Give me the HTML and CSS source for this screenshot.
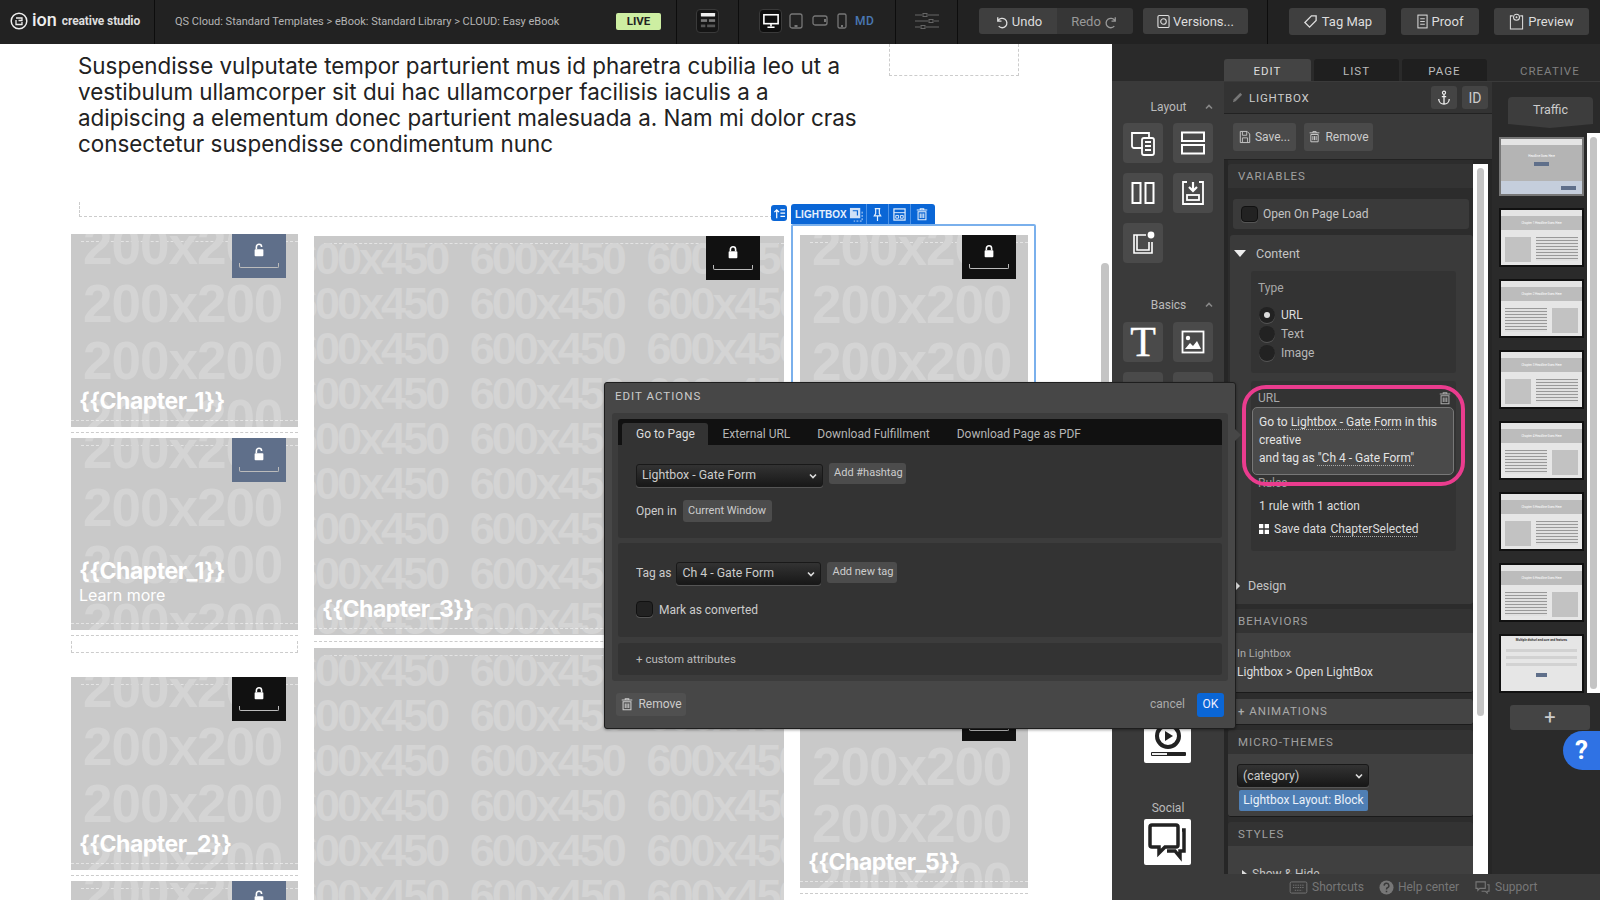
FILE: index.html
```html
<!DOCTYPE html>
<html lang="en">
<head>
  <meta charset="UTF-8">
  <title>ion creative studio</title>
  <link rel="stylesheet" href="styles.css">
</head>
<body>
<svg class="sprites" width="0" height="0">
  <symbol id="i-trash" viewBox="0 0 16 16"><path d="M2 3.5h12M6 3.5V2h4v1.5M3.5 5.5h9v9h-9zM6 7.5v5M8 7.5v5M10 7.5v5" fill="none" stroke="currentColor" stroke-width="1.2"/></symbol>
  <symbol id="i-lock" viewBox="0 0 16 16"><path d="M5 7V5a3 3 0 0 1 6 0v2" fill="none" stroke="#fff" stroke-width="1.8"/><rect x="3" y="7" width="10" height="8" rx="1" fill="#fff"/></symbol>
  <symbol id="i-unlock" viewBox="0 0 16 16"><path d="M5 7V4.5a3 3 0 0 1 6 0" fill="none" stroke="#fff" stroke-width="1.8"/><rect x="3" y="7" width="10" height="8" rx="1" fill="#fff"/></symbol>
  <symbol id="i-chev" viewBox="0 0 8 6"><path d="M1 1.5l3 3 3-3" fill="none" stroke="currentColor" stroke-width="1.6"/></symbol>
</svg>

<header class="topbar">
  <div class="tb-brand">
    <svg class="logo" viewBox="0 0 18 18" width="18" height="18"><circle cx="9" cy="9" r="7.8" fill="none" stroke="#eee" stroke-width="1.5"/><path d="M6 6h6v2.5H8.500M6 8v4.500h6V10" fill="none" stroke="#eee" stroke-width="1.3"/></svg>
    <span class="ion">ion</span>
    <span class="studio">creative studio</span>
  </div>
  <div class="tb-crumbs">QS Cloud: Standard Templates &gt; eBook: Standard Library &gt; CLOUD: Easy eBook</div>
  <div class="tb-live"><span class="live">LIVE</span></div>
  <div class="tb-layout">
    <span class="layout-btn"><svg viewBox="0 0 18 22" width="16" height="20"><rect x="1" y="2" width="16" height="4" rx=".5" fill="#eee"/><rect x="1" y="9" width="7" height="3" fill="#777"/><rect x="10" y="9" width="7" height="3" fill="#777"/><rect x="1" y="15" width="5" height="3" fill="#555"/><rect x="8" y="15" width="9" height="3" fill="#555"/></svg></span>
  </div>
  <div class="tb-devices">
    <span class="device on"><svg viewBox="0 0 20 18" width="18" height="16"><rect x="2" y="2" width="16" height="10" fill="none" stroke="#fff" stroke-width="1.8"/><path d="M10 12v3M6 16h8" stroke="#fff" stroke-width="1.8"/></svg></span>
    <svg class="dev" viewBox="0 0 14 16" width="14" height="16"><rect x="1" y="1" width="12" height="14" rx="2" fill="none" stroke="#777" stroke-width="1.3"/><rect x="5.5" y="12" width="3" height="2" fill="#777"/></svg>
    <svg class="dev" viewBox="0 0 16 12" width="16" height="12"><rect x="1" y="1" width="14" height="9" rx="2" fill="none" stroke="#777" stroke-width="1.3"/><rect x="12" y="4" width="2" height="3" fill="#777"/></svg>
    <svg class="dev" viewBox="0 0 10 16" width="10" height="16"><rect x="1" y="1" width="8" height="14" rx="1.5" fill="none" stroke="#777" stroke-width="1.3"/><rect x="4" y="12" width="2" height="2" fill="#777"/></svg>
    <span class="md">MD</span>
  </div>
  <div class="tb-sliders">
    <svg viewBox="0 0 26 18" width="26" height="18"><path d="M1 3h7M14 3h11M1 9h13M20 9h5M1 15h5M12 15h13" stroke="#666" stroke-width="1.2"/><rect x="9" y="1.5" width="4" height="3" fill="none" stroke="#666"/><rect x="15" y="7.5" width="4" height="3" fill="none" stroke="#666"/><rect x="7" y="13.5" width="4" height="3" fill="none" stroke="#666"/></svg>
  </div>
  <div class="tb-history">
    <div class="btn-group">
      <span class="tb-btn"><svg viewBox="0 0 16 16" width="15" height="15"><path d="M4 3.5v4h4M4.5 7a5 5 0 1 1 .5 6" fill="none" stroke="#ddd" stroke-width="1.4"/></svg>Undo</span>
      <span class="tb-btn off">Redo<svg viewBox="0 0 16 16" width="15" height="15"><path d="M12 3.5v4H8M11.500 7a5 5 0 1 0-.5 6" fill="none" stroke="#999" stroke-width="1.4"/></svg></span>
    </div>
    <span class="tb-btn solo"><svg viewBox="0 0 14 16" width="13" height="15"><rect x="1" y="1.5" width="12" height="13" rx="1.5" fill="none" stroke="#ddd" stroke-width="1.2"/><circle cx="7" cy="8" r="3" fill="none" stroke="#ddd" stroke-width="1.2"/></svg>Versions...</span>
  </div>
  <div class="tb-actions">
    <span class="tb-btn solo"><svg viewBox="0 0 16 16" width="15" height="15"><path d="M9 2h5v5l-7 7-5-5z" fill="none" stroke="#ddd" stroke-width="1.4"/></svg>Tag Map</span>
    <span class="tb-btn solo"><svg viewBox="0 0 12 16" width="11" height="15"><rect x="1" y="1" width="10" height="14" fill="none" stroke="#ddd" stroke-width="1.1"/><path d="M3.500 5h5M3.500 8h5M3.500 11h5" stroke="#ddd"/></svg>Proof</span>
    <span class="tb-btn solo"><svg viewBox="0 0 16 18" width="15" height="17"><path d="M4 3H1.500v14h13V3H12" fill="none" stroke="#ddd" stroke-width="1.1"/><circle cx="8" cy="4.5" r="3.2" fill="none" stroke="#ddd" stroke-width="1.1"/><circle cx="8" cy="4.5" r="1" fill="#ddd"/></svg>Preview</span>
  </div>
</header>

<div class="workspace">
  <main class="canvas">
    <div class="canvas-top">
      <p class="lead">Suspendisse vulputate tempor parturient mus id pharetra cubilia leo ut a vestibulum ullamcorper sit dui hac ullamcorper facilisis iaculis a a adipiscing a elementum donec parturient malesuada a. Nam mi dolor cras consectetur suspendisse condimentum nunc</p>
      <div class="dash-top"></div>
    </div>
    <div class="dash-bar"></div>

    <div class="columns">
      <div class="col col-small">
        <div class="slot">
          <div class="card h193">
            <div class="ph">200x200 200x200 200x200 200x200</div>
            <span class="lock-tile open"><svg width="14" height="14"><use href="#i-unlock"/></svg><i></i></span>
            <div class="chapter">{{Chapter_1}}</div>
          </div>
        </div>
        <div class="slot">
          <div class="card h192 with-link">
            <div class="ph">200x200 200x200 200x200 200x200</div>
            <span class="lock-tile open"><svg width="14" height="14"><use href="#i-unlock"/></svg><i></i></span>
            <div class="chapter">{{Chapter_1}}</div>
            <div class="learn">Learn more</div>
          </div>
        </div>
        <div class="dash-box"></div>
        <div class="slot">
          <div class="card h193">
            <div class="ph">200x200 200x200 200x200 200x200</div>
            <span class="lock-tile"><svg width="14" height="14"><use href="#i-lock"/></svg><i></i></span>
            <div class="chapter">{{Chapter_2}}</div>
          </div>
        </div>
        <div class="card h193">
          <div class="ph">200x200 200x200 200x200 200x200</div>
          <span class="lock-tile open"><svg width="14" height="14"><use href="#i-unlock"/></svg><i></i></span>
        </div>
      </div>

      <div class="col col-wide">
        <div class="slot">
          <div class="card h399">
            <div class="ph ph-wide">600x450 600x450 600x450 600x450 600x450 600x450 600x450 600x450 600x450 600x450 600x450 600x450 600x450 600x450 600x450 600x450 600x450 600x450 600x450 600x450 600x450 600x450 600x450 600x450 600x450 600x450 600x450</div>
            <span class="lock-tile wide-lock"><svg width="14" height="14"><use href="#i-lock"/></svg><i></i></span>
            <div class="chapter">{{Chapter_3}}</div>
          </div>
        </div>
        <div class="card h399">
          <div class="ph ph-wide">600x450 600x450 600x450 600x450 600x450 600x450 600x450 600x450 600x450 600x450 600x450 600x450 600x450 600x450 600x450 600x450 600x450 600x450 600x450 600x450 600x450 600x450 600x450 600x450 600x450 600x450 600x450</div>
        </div>
      </div>

      <div class="col col-box">
        <div class="lightbox">
          <span class="lb-up"><svg viewBox="0 0 14 14" width="13" height="13"><path d="M4 12V3M1.5 5.5L4 3l2.5 2.5M8 3h5M8 6.5h5M8 10h5" fill="none" stroke="#fff" stroke-width="1.3"/></svg></span>
          <div class="lb-tools">
            <span class="lb-name">LIGHTBOX</span>
            <span class="lb-tool first"><svg viewBox="0 0 16 16" width="15" height="15"><rect x="1" y="1" width="11" height="11" fill="#cfe0f7"/><path d="M4 4h5v5" fill="none" stroke="#0a66d6" stroke-width="1.3"/><path d="M14 5v10H5" fill="none" stroke="#cfe0f7" stroke-dasharray="2 1.5"/></svg></span>
            <span class="lb-tool"><svg viewBox="0 0 12 16" width="11" height="15"><path d="M3 1.5h6M4 2v5L2.5 9.500h7L8 7V2M6 10v5" fill="none" stroke="#e6f0fc" stroke-width="1.3"/></svg></span>
            <span class="lb-tool"><svg viewBox="0 0 14 14" width="13" height="13"><rect x="1" y="1" width="12" height="12" fill="none" stroke="#e6f0fc" stroke-width="1.3"/><path d="M1 5h12M3 8h3v3H3zM8 8h3v3H8z" fill="none" stroke="#e6f0fc"/></svg></span>
            <span class="lb-tool"><svg class="lb-trash" width="14" height="14"><use href="#i-trash"/></svg></span>
          </div>
          <div class="card h197">
            <div class="ph">200x200 200x200 200x200 200x200</div>
            <span class="lock-tile"><svg width="14" height="14"><use href="#i-lock"/></svg><i></i></span>
          </div>
        </div>
        <div class="slot last">
          <div class="card h191">
            <div class="ph">200x200 200x200 200x200 200x200</div>
            <span class="lock-tile"><svg width="14" height="14"><use href="#i-lock"/></svg><i></i></span>
            <div class="chapter">{{Chapter_5}}</div>
          </div>
        </div>
      </div>
    </div>

    <div class="canvas-scroll"><span></span></div>
  </main>

  <aside class="dock">
    <div class="dock-tabs">
      <span class="dock-tab active">EDIT</span>
      <span class="dock-tab">LIST</span>
      <span class="dock-tab">PAGE</span>
      <span class="creative-tab">CREATIVE</span>
    </div>

    <div class="dock-body">
      <div class="tools">
        <div class="tool-head">Layout<svg width="8" height="6" class="up"><use href="#i-chev"/></svg></div>
        <div class="tool-grid">
          <span class="tile"><svg viewBox="0 0 30 30" width="30" height="30"><path d="M10 20H6a2 2 0 0 1-2-2V5h17v4M5 20h10" fill="none" stroke="#fff" stroke-width="1.8"/><rect x="14" y="10" width="12" height="17" rx="2" fill="none" stroke="#fff" stroke-width="1.8"/><path d="M17 14h6M17 18h6M17 22h6" stroke="#fff" stroke-width="1.8"/></svg></span>
          <span class="tile"><svg viewBox="0 0 26 24" width="26" height="24"><rect x="2" y="1.5" width="22" height="8.5" fill="none" stroke="#fff" stroke-width="2"/><rect x="2" y="14" width="22" height="8.5" fill="none" stroke="#fff" stroke-width="2"/></svg></span>
          <span class="tile"><svg viewBox="0 0 24 24" width="24" height="24"><rect x="1.5" y="2" width="8" height="20" fill="none" stroke="#fff" stroke-width="2"/><rect x="14.5" y="2" width="8" height="20" fill="none" stroke="#fff" stroke-width="2"/></svg></span>
          <span class="tile"><svg viewBox="0 0 24 26" width="24" height="26"><path d="M6 2H2v22h20V2h-4" fill="none" stroke="#fff" stroke-width="1.8"/><path d="M12 2v8M8 7l4 4 4-4" fill="none" stroke="#fff" stroke-width="2.2"/><rect x="6" y="15" width="12" height="5" fill="none" stroke="#fff" stroke-width="1.8"/></svg></span>
          <span class="tile"><svg viewBox="0 0 24 24" width="24" height="24"><path d="M15 4H3v18h18V11M6 4v15h12V11" fill="none" stroke="#fff" stroke-width="1.6"/><circle cx="20" cy="4" r="3.4" fill="#fff"/></svg></span>
        </div>
        <div class="tool-head basics">Basics<svg width="8" height="6" class="up"><use href="#i-chev"/></svg></div>
        <div class="tool-grid">
          <span class="tile tile-t">T</span>
          <span class="tile"><svg viewBox="0 0 24 24" width="24" height="24"><rect x="1.5" y="1.5" width="21" height="21" fill="none" stroke="#fff" stroke-width="1.8"/><circle cx="7" cy="8" r="2.2" fill="#fff"/><path d="M4 19l5-6 3 3 4-5 4 8z" fill="#fff"/></svg></span>
          <span class="tile"></span>
          <span class="tile"></span>
        </div>
        <div class="white-tile video">
          <svg viewBox="0 0 46 46" width="46" height="46"><circle cx="23" cy="19" r="11" fill="none" stroke="#222" stroke-width="4"/><path d="M20 14l8 5-8 5z" fill="#222"/><rect x="6" y="35" width="35" height="4" rx="1" fill="#222"/><rect x="7" y="36" width="15" height="2" fill="#eee"/></svg>
        </div>
        <div class="tool-label">Social</div>
        <div class="white-tile social">
          <svg viewBox="0 0 46 46" width="46" height="46"><path d="M7 6h24a2 2 0 0 1 2 2v18a2 2 0 0 1-2 2H20l-6 6v-6H7a2 2 0 0 1-2-2V8a2 2 0 0 1 2-2z" fill="none" stroke="#222" stroke-width="3.5"/><path d="M37 11h2v21h-4v6l-5-6h-8" fill="none" stroke="#222" stroke-width="3.5"/></svg>
        </div>
      </div>

      <div class="dock-main">
        <div class="dock-row">
          <section class="inspector">
            <div class="insp-head">
              <svg class="pencil" viewBox="0 0 14 14" width="13" height="13"><path d="M2 12l1-3 7-7 2 2-7 7z" fill="#777"/></svg>
              <span class="insp-title">LIGHTBOX</span>
              <span class="square-btn anchor"><svg viewBox="0 0 16 18" width="14" height="16"><circle cx="8" cy="3" r="1.8" fill="none" stroke="#eee" stroke-width="1.3"/><path d="M8 5v11M2 10c0 4 3 6 6 6s6-2 6-6M5.500 7.500h5" fill="none" stroke="#eee" stroke-width="1.5"/></svg></span>
              <span class="square-btn">ID</span>
            </div>
            <div class="insp-actions">
              <span class="btn save"><svg viewBox="0 0 14 16" width="12" height="14"><path d="M1.500 1.500h8l3 3v10h-11z" fill="none" stroke="#ccc" stroke-width="1.1"/><path d="M4 2v4h5V2M4 14v-5h6v5" fill="none" stroke="#ccc"/></svg>Save...</span>
              <span class="btn remove"><svg width="13" height="13"><use href="#i-trash"/></svg>Remove</span>
            </div>
            <div class="insp-scroll">
              <div class="insp-list">
                <h3 class="sec-head first">VARIABLES</h3>
                <div class="check-row"><span class="checkbox"></span>Open On Page Load</div>

                <div class="content-block">
                  <div class="tree-row"><i class="tri-down"></i>Content</div>
                  <div class="box type-box">
                    <div class="box-label">Type</div>
                    <label class="radio-row sel"><i class="radio"></i>URL</label>
                    <label class="radio-row"><i class="radio"></i>Text</label>
                    <label class="radio-row"><i class="radio"></i>Image</label>
                  </div>
                  <div class="box url-box">
                    <div class="url-head">URL<svg width="14" height="14"><use href="#i-trash"/></svg></div>
                    <div class="url-text">Go to <u>Lightbox - Gate Form</u> in this creative<br>and tag as <u>"Ch 4 - Gate Form"</u></div>
                    <div class="rules-label">Rules</div>
                    <div class="rule-line">1 rule with 1 action</div>
                    <div class="rule-line save-data"><svg viewBox="0 0 10 10" width="10" height="10"><path d="M0 0h4.300v4.300H0zM5.700 0H10v4.300H5.700zM0 5.700h4.300V10H0zM5.700 5.700H10V10H5.700z" fill="#fff"/></svg>Save data <u>ChapterSelected</u></div>
                    <div class="ring"></div>
                  </div>
                  <div class="tree-row design"><i class="tri-right"></i>Design</div>
                </div>

                <h3 class="sec-head">BEHAVIORS</h3>
                <div class="sec-body behaviors">
                  <div class="muted">In Lightbox</div>
                  <div>Lightbox &gt; Open LightBox</div>
                </div>
                <h3 class="sec-head anim"><span class="plus">+</span> ANIMATIONS</h3>
                <h3 class="sec-head">MICRO-THEMES</h3>
                <div class="sec-body themes">
                  <div class="select theme-select">(category)<svg width="8" height="6"><use href="#i-chev"/></svg></div>
                  <div class="theme-tag">Lightbox Layout: Block</div>
                </div>
                <h3 class="sec-head">STYLES</h3>
                <div class="sec-body styles"><div class="tree-row small"><i class="tri-right sm"></i>Show &amp; Hide</div></div>
              </div>
              <div class="white-scroll"><span></span></div>
            </div>
          </section>

          <section class="pages">
            <div class="traffic">Traffic</div>
            <div class="thumb-area">
              <div class="thumb-list">
                <div class="thumb selected"><i class="th-bar"></i><div class="th-hero tall"><b>Headline Goes Here</b><i class="th-btn"></i></div><div class="th-foot"><i class="th-btn"></i></div></div>
                <div class="thumb"><i class="th-bar"></i><div class="th-hero"><b>Chapter 1 Headline Goes Here</b></div><div class="th-split"><i class="th-img"></i><i class="th-lines"></i></div></div>
                <div class="thumb"><i class="th-bar"></i><div class="th-hero"><b>Chapter 2 Headline Goes Here</b></div><div class="th-split"><i class="th-lines"></i><i class="th-img"></i></div></div>
                <div class="thumb"><i class="th-bar"></i><div class="th-hero"><b>Chapter 3 Headline Goes Here</b></div><div class="th-split"><i class="th-img"></i><i class="th-lines"></i></div></div>
                <div class="thumb"><i class="th-bar"></i><div class="th-hero"><b>Chapter 4 Headline Goes Here</b></div><div class="th-split"><i class="th-lines"></i><i class="th-img"></i></div></div>
                <div class="thumb"><i class="th-bar"></i><div class="th-hero"><b>Chapter 5 Headline Goes Here</b></div><div class="th-split"><i class="th-img"></i><i class="th-lines"></i></div></div>
                <div class="thumb"><i class="th-bar"></i><div class="th-hero"><b>Chapter 6 Headline Goes Here</b></div><div class="th-split"><i class="th-lines"></i><i class="th-img"></i></div></div>
                <div class="thumb form"><b>Multiple dtchurl and sure and features</b><i class="th-field"></i><i class="th-field"></i><i class="th-field"></i><i class="th-btn"></i></div>
              </div>
              <div class="white-scroll thumbs-scroll"><span></span></div>
            </div>
            <div class="add-page">+</div>
          </section>
        </div>

        <footer class="dock-foot">
          <span><svg viewBox="0 0 20 14" width="19" height="13"><rect x="1" y="1" width="18" height="12" rx="1.5" fill="none" stroke="#777"/><path d="M4 4.500h12M4 7h12M6 10h8" stroke="#777" stroke-dasharray="1.5 1"/></svg>Shortcuts</span>
          <span><svg viewBox="0 0 16 16" width="15" height="15"><circle cx="8" cy="8" r="7.5" fill="#777"/><path d="M5.500 6a2.500 2.500 0 1 1 3.500 2.300c-.7.3-1 .7-1 1.700M8 11.500v1.500" fill="none" stroke="#3a3a3a" stroke-width="1.6"/></svg>Help center</span>
          <span><svg viewBox="0 0 18 14" width="17" height="13"><path d="M2 1h10v7H6l-2 2V8H2zM14 4h2v7h-2v2l-2-2H8" fill="none" stroke="#777" stroke-width="1.2"/></svg>Support</span>
        </footer>
      </div>
    </div>
  </aside>

  <div class="help-bubble">?</div>

  <div class="modal">
    <div class="modal-title">EDIT ACTIONS</div>
    <div class="modal-inner">
      <div class="modal-tabs">
        <span class="modal-tab active">Go to Page</span>
        <span class="modal-tab">External URL</span>
        <span class="modal-tab">Download Fulfillment</span>
        <span class="modal-tab">Download Page as PDF</span>
      </div>
      <div class="modal-sec goto">
        <div class="m-row">
          <div class="select page-select">Lightbox - Gate Form<svg width="8" height="6"><use href="#i-chev"/></svg></div>
          <span class="m-btn hash">Add #hashtag</span>
        </div>
        <div class="m-row open-row">Open in<span class="m-btn window">Current Window</span></div>
      </div>
      <div class="modal-sec tag">
        <div class="m-row">Tag as<div class="select tag-select">Ch 4 - Gate Form<svg width="8" height="6"><use href="#i-chev"/></svg></div><span class="m-btn newtag">Add new tag</span></div>
        <div class="m-row convert"><span class="checkbox small"></span>Mark as converted</div>
      </div>
      <div class="modal-sec attrs">+ custom attributes</div>
    </div>
    <div class="modal-foot">
      <span class="btn m-remove"><svg width="14" height="14"><use href="#i-trash"/></svg>Remove</span>
      <span class="cancel">cancel</span>
      <span class="ok">OK</span>
    </div>
  </div>
</div>
</body>
</html>
```
FILE: styles.css
```css
* {
  margin: 0;
  padding: 0;
  box-sizing: border-box;
}
html, body {
  width: 1600px;
  height: 900px;
  overflow: hidden;
}
body {
  font-family: Roboto, "Liberation Sans", sans-serif;
  font-size: 12px;
  color: #ddd;
  background: #222;
  display: flex;
  flex-direction: column;
}
.sprites {
  position: absolute;
}
svg {
  display: block;
  flex: none;
}

/* top bar */
.topbar {
  height: 44px;
  flex: none;
  display: flex;
  background: #222;
}
.topbar > div {
  display: flex;
  align-items: center;
  height: 100%;
  padding-bottom: 2px;
  border-right: 1px solid #0d0d0d;
}
.tb-brand {
  width: 155px;
  padding-left: 10px;
}
.logo {
  margin-right: 4px;
}
.ion {
  font-size: 18px;
  font-weight: 500;
  color: #eee;
  margin-right: 5px;
  margin-top: -3px;
}
.studio {
  font-size: 12px;
  font-weight: 700;
  color: #ddd;
  letter-spacing: -.1px;
}
.tb-crumbs {
  width: 430px;
  padding-left: 20px;
  font-size: 11px;
  color: #b5b5b5;
  border-right: none !important;
  white-space: nowrap;
}
.tb-live {
  width: 92px;
  padding-left: 31px;
}
.live {
  width: 45px;
  height: 17px;
  background: #cdeea2;
  color: #222;
  border-radius: 2px;
  font-size: 11.5px;
  font-weight: 700;
  text-align: center;
  line-height: 16px;
}
.tb-layout {
  width: 62px;
  justify-content: center;
}
.layout-btn {
  width: 23px;
  height: 24px;
  background: #151515;
  border: 1px solid #3a3a3a;
  border-radius: 4px;
  display: flex;
  align-items: center;
  justify-content: center;
}
.tb-devices {
  width: 157px;
  padding-left: 20px;
  gap: 9px;
}
.device {
  width: 23px;
  height: 24px;
  background: #0e0e0e;
  border: 1px solid #3a3a3a;
  border-radius: 4px;
  display: flex;
  align-items: center;
  justify-content: center;
  margin-right: -2px;
}
.md {
  color: #4a78b4;
  font-size: 12px;
  font-weight: 500;
  letter-spacing: .5px;
  margin-left: -1px;
}
.tb-sliders {
  width: 62px;
  justify-content: center;
}
.tb-history {
  width: 310px;
  padding-left: 21px;
  gap: 10px;
}
.btn-group {
  display: flex;
  height: 26px;
}
.tb-btn {
  display: flex;
  align-items: center;
  justify-content: center;
  gap: 3px;
  height: 26px;
  background: #3f3f3f;
  color: #ddd;
  font-size: 13px;
  width: 78px;
  border-radius: 3px 0 0 3px;
}
.tb-btn.off {
  background: #363636;
  color: #999;
  border-radius: 0 3px 3px 0;
  width: 76px;
}
.tb-btn.solo {
  border-radius: 3px;
  width: 105px;
}
.tb-actions {
  border-right: none !important;
  padding-left: 21px;
  gap: 15px;
}
.tb-actions .tb-btn {
  height: 27px;
  gap: 4px;
}
.tb-actions .tb-btn:nth-child(1) {
  width: 97px;
}
.tb-actions .tb-btn:nth-child(2) {
  width: 78px;
}
.tb-actions .tb-btn:nth-child(3) {
  width: 95px;
}

.workspace {
  flex: 1;
  display: flex;
  position: relative;
  min-height: 0;
}

/* canvas */
.canvas {
  width: 1112px;
  flex: none;
  background: #fff;
  position: relative;
  overflow: hidden;
  color: #222;
}
.canvas-top {
  display: flex;
  padding: 9px 0 0 78px;
  height: 157px;
}
.lead {
  width: 790px;
  font-family: Inter, "Liberation Sans", sans-serif;
  font-size: 22.4px;
  line-height: 26px;
  color: #222;
}
.dash-top {
  width: 130px;
  height: 32px;
  margin-left: 21px;
  margin-top: -9px;
  border: 1px dashed #ccc;
  border-top: none;
}
.dash-bar {
  height: 15px;
  width: 694px;
  margin-left: 79px;
  border: 1px dashed #ccc;
  border-top: none;
  border-right: none;
  margin-top: 1px;
}
.columns {
  display: flex;
  padding-left: 71px;
  margin-top: 7px;
}
.col {
  flex: none;
  display: flex;
  flex-direction: column;
}
.col-small {
  width: 227px;
  padding-top: 10px;
}
.col-wide {
  width: 493px;
  padding: 12px 7px 0 16px;
}
.col-wide .slot {
  padding-bottom: 6px;
  margin-bottom: 6px;
}
.col-box {
  width: 245px;
}
.slot {
  padding-bottom: 5px;
  margin-bottom: 5px;
  border-bottom: 1px dashed #ccc;
}
.card {
  position: relative;
  overflow: hidden;
  background: #c9c9c9;
  display: flex;
  flex-direction: column;
  justify-content: flex-end;
  padding: 0 8px 12px;
  color: #fff;
}
.card::before, .card::after {
  content: "";
  position: absolute;
  left: 10px;
  right: 0;
  height: 0;
  border-top: 1px dashed rgba(255, 255, 255, .5);
}
.card::before {
  top: 7px;
}
.card::after {
  bottom: 6px;
  left: 0;
}
.h191 { height: 191px; }
.h192 { height: 192px; }
.h193 { height: 193px; }
.h197 { height: 197px; }
.h399 { height: 399px; }
.ph {
  position: absolute;
  left: 12px;
  top: -17px;
  width: 210px;
  font-family: "Liberation Sans", Arial, sans-serif;
  font-weight: 700;
  font-size: 53px;
  line-height: 57.5px;
  letter-spacing: -1px;
  color: #d4d4d4;
}
.ph-wide {
  left: -21px;
  top: 0;
  width: 530px;
  font-size: 45px;
  line-height: 45px;
  letter-spacing: -3px;
  word-spacing: 13px;
}
.chapter {
  position: relative;
  font-family: Inter, "Liberation Sans", sans-serif;
  font-size: 23px;
  font-weight: 700;
  line-height: 28px;
  letter-spacing: -.5px;
  white-space: nowrap;
}
.learn {
  position: relative;
  font-family: Inter, "Liberation Sans", sans-serif;
  font-size: 16px;
  line-height: 20px;
  color: #fff;
  white-space: nowrap;
}
.with-link {
  padding-bottom: 25px;
}
.lock-tile {
  position: absolute;
  top: 0;
  right: 12px;
  width: 54px;
  height: 44px;
  background: #111;
  display: flex;
  flex-direction: column;
  align-items: center;
  padding-top: 9px;
}
.lock-tile.open {
  background: #5f6f8a;
}
.wide-lock {
  right: 24px;
}
.lock-tile i {
  width: 40px;
  height: 5px;
  margin-top: 6px;
  border: 1px solid #bbb;
  border-top: none;
  border-radius: 0 0 2px 2px;
}
.dash-box {
  height: 12px;
  border: 1px dashed #ccc;
  border-top: none;
  margin-bottom: 24px;
}
.lightbox {
  position: relative;
  height: 216px;
  padding: 9px 6px 0 7px;
  border: 2px solid #7ab0ec;
  border-radius: 2px;
  margin-bottom: 257px;
}
.lb-up {
  position: absolute;
  left: -22px;
  top: -21px;
  width: 16px;
  height: 16px;
  background: #0a66d6;
  border-radius: 3px;
  display: flex;
  align-items: center;
  justify-content: center;
}
.lb-tools {
  position: absolute;
  left: -2px;
  top: -22px;
  width: 144px;
  height: 20px;
  background: #0a66d6;
  border-radius: 3px 3px 0 0;
  display: flex;
  align-items: center;
  color: #e6f0fc;
}
.lb-name {
  font-family: "Liberation Sans", Arial, sans-serif;
  font-size: 10px;
  font-weight: 700;
  padding-left: 4px;
  width: 55px;
}
.lb-tool {
  width: 22px;
  height: 20px;
  display: flex;
  align-items: center;
  justify-content: center;
  border-left: 1px solid #4d92e6;
}
.lb-tool.first {
  border-left: none;
  width: 20px;
}
.lb-trash {
  color: #e6f0fc;
}
.slot.last {
  margin-bottom: 0;
  margin-left: 9px;
  margin-right: 8px;
}
.canvas-scroll {
  position: absolute;
  right: 3px;
  top: 219px;
  width: 8px;
  height: 390px;
}
.canvas-scroll span {
  display: block;
  height: 100%;
  background: #c4c4c4;
  border-radius: 4px;
}

/* right dock */
.dock {
  flex: 1;
  background: #2a2a2a;
  display: flex;
  flex-direction: column;
  min-width: 0;
}
.dock-tabs {
  height: 38px;
  flex: none;
  display: flex;
  align-items: flex-end;
  padding-left: 112px;
  gap: 3px;
  border-bottom: 1px solid #3a3a3a;
}
.dock-tab {
  width: 85px;
  height: 22px;
  background: #1f1f1f;
  color: #bbb;
  border-radius: 3px 3px 0 0;
  font-size: 11.5px;
  letter-spacing: 1px;
  text-align: center;
  line-height: 24px;
}
.dock-tab.active {
  width: 87px;
  background: #444;
  color: #ddd;
}
.creative-tab {
  margin-left: 30px;
  color: #808080;
  font-size: 11.5px;
  letter-spacing: 1px;
  padding-bottom: 3px;
}
.dock-body {
  flex: 1;
  display: flex;
  min-height: 0;
}
.tools {
  width: 112px;
  flex: none;
  background: #3a3a3a;
  padding: 18px 0 0 11px;
  color: #bbb;
}
.tool-head {
  font-size: 12px;
  text-align: center;
  height: 20px;
  position: relative;
  padding-right: 10px;
  margin-bottom: 3px;
}
.tool-head .up {
  position: absolute;
  right: 11px;
  top: 4px;
  transform: rotate(180deg);
  color: #888;
}
.basics {
  margin-top: 35px;
  margin-bottom: 4px;
}
.tool-grid {
  display: grid;
  grid-template-columns: 40px 40px;
  gap: 10px;
  grid-auto-rows: 40px;
}
.tile {
  background: #4a4a4a;
  border-radius: 4px;
  display: flex;
  align-items: center;
  justify-content: center;
}
.tile-t {
  font-family: "Liberation Serif", serif;
  font-size: 42px;
  color: #fff;
  -webkit-text-stroke: .3px #fff;
}
.white-tile {
  width: 47px;
  height: 46px;
  background: #fff;
  border-radius: 2px;
  margin-left: 21px;
  overflow: hidden;
  display: flex;
  justify-content: center;
}
.video {
  margin-top: 305px;
}
.tool-label {
  text-align: center;
  font-size: 12px;
  line-height: 15px;
  padding-right: 11px;
  margin: 38px 0 3px;
  color: #bbb;
}
.social {
  align-items: center;
}
.dock-main {
  flex: 1;
  min-width: 0;
  display: flex;
  flex-direction: column;
}
.dock-row {
  flex: 1;
  display: flex;
  min-height: 0;
}
.inspector {
  width: 268px;
  flex: none;
  background: #262626;
  display: flex;
  flex-direction: column;
  overflow: hidden;
}
.insp-head {
  height: 32px;
  flex: none;
  background: #333;
  display: flex;
  align-items: center;
  padding: 0 4px 0 7px;
  gap: 5px;
  border-bottom: 1px solid #222;
}
.insp-title {
  flex: 1;
  font-size: 11.5px;
  letter-spacing: .8px;
  color: #ccc;
}
.square-btn {
  width: 26px;
  height: 23px;
  background: #444;
  border-radius: 3px;
  display: flex;
  align-items: center;
  justify-content: center;
  color: #ccc;
  font-size: 14px;
}
.insp-actions {
  height: 46px;
  flex: none;
  background: #3a3a3a;
  display: flex;
  align-items: center;
  padding: 0 9px;
  gap: 8px;
  border-bottom: 1px solid #222;
}
.btn {
  display: flex;
  align-items: center;
  justify-content: center;
  gap: 4px;
  height: 28px;
  background: #4a4a4a;
  border-radius: 3px;
  color: #ccc;
  font-size: 12px;
}
.save {
  width: 63px;
}
.remove {
  width: 69px;
}
.insp-scroll {
  flex: 1;
  display: flex;
  min-height: 0;
  padding-left: 4px;
}
.insp-list {
  width: 245px;
  flex: none;
  overflow: hidden;
  background: #2c2c2c;
}
.sec-head {
  height: 24px;
  background: #333;
  font-size: 11.5px;
  font-weight: 400;
  color: #a0a0a0;
  letter-spacing: 1px;
  line-height: 24px;
  padding-left: 10px;
  border-radius: 3px 3px 0 0;
  margin-top: 5px;
}
.sec-head.first {
  margin-top: 4px;
}
.sec-head.anim {
  background: #444;
  height: 26px;
  line-height: 25px;
  border-radius: 3px;
  margin-top: 6px;
  color: #aaa;
  border-bottom: 1px solid #1c1c1c;
}
.plus {
  font-weight: 500;
}
.check-row {
  display: flex;
  align-items: center;
  gap: 5px;
  height: 30px;
  margin: 11px 4px 6px 5px;
  padding-left: 8px;
  background: #3a3a3a;
  border-radius: 3px;
  font-size: 12px;
  color: #c4c4c4;
}
.checkbox {
  width: 17px;
  height: 16px;
  background: #222;
  border: 1px solid #111;
  border-radius: 4px;
  box-shadow: 0 1px 0 #555;
}
.content-block {
  height: 369px;
  background: #3a3a3a;
  padding-left: 21px;
  position: relative;
  border-radius: 3px;
  margin-left: 2px;
}
.tree-row {
  height: 36px;
  display: flex;
  align-items: center;
  gap: 10px;
  margin-left: -17px;
  font-size: 12.5px;
  color: #c4c4c4;
}
.tri-down {
  width: 0;
  height: 0;
  border: 6px solid transparent;
  border-top: 7px solid #eee;
  border-bottom: none;
}
.tri-right {
  width: 0;
  height: 0;
  border: 6px solid transparent;
  border-left: 6px solid #ddd;
  border-right: none;
}
.box {
  width: 205px;
  background: #333;
  border-radius: 3px;
}
.type-box {
  height: 102px;
  margin-bottom: 8px;
  padding: 10px 7px;
}
.box-label {
  font-size: 12px;
  color: #a8a8a8;
  margin-bottom: 10px;
}
.radio-row {
  display: flex;
  align-items: center;
  height: 19px;
  gap: 6px;
  margin-left: 1px;
  font-size: 12px;
  color: #b8b8b8;
}
.radio {
  width: 16px;
  height: 16px;
  border-radius: 50%;
  background: #222;
  box-shadow: 0 1px 0 #555;
  position: relative;
}
.radio-row.sel {
  color: #ddd;
}
.radio-row.sel .radio::after {
  content: "";
  position: absolute;
  left: 5px;
  top: 5px;
  width: 6px;
  height: 6px;
  border-radius: 50%;
  background: #ddd;
}
.url-box {
  height: 170px;
  position: relative;
  padding-top: 9px;
}
.url-head {
  display: flex;
  justify-content: space-between;
  align-items: center;
  height: 16px;
  padding: 0 4px 0 7px;
  font-size: 12px;
  color: #aaa;
}
.url-text {
  margin: 1px 2px 0 1px;
  height: 68px;
  padding: 5px 6px;
  background: #4a4a4a;
  border: 1px solid #777;
  border-radius: 5px;
  font-size: 12px;
  line-height: 18px;
  color: #e4e4e4;
}
u {
  text-decoration: underline dotted #aaa;
  text-underline-offset: 3px;
}
.rules-label {
  font-size: 12px;
  color: #999;
  padding-left: 7px;
  margin-top: 1px;
}
.rule-line {
  font-size: 12px;
  padding-left: 8px;
  color: #ddd;
  margin-top: 9px;
}
.save-data {
  display: flex;
  gap: 5px;
  align-items: center;
}
.save-data u {
  margin-left: -1px;
}
.ring {
  position: absolute;
  left: -9px;
  top: 4px;
  width: 223px;
  height: 101px;
  border: 4px solid #ea3c8e;
  border-radius: 24px;
}
.design {
  height: 35px;
  margin-top: 17px;
  gap: 8px;
}
.sec-body {
  background: #404040;
  border-bottom: 1px solid #1a1a1a;
  border-radius: 0 0 3px 3px;
  padding-left: 9px;
}
.behaviors {
  height: 60px;
  padding-top: 11px;
  font-size: 12px;
  line-height: 19px;
  color: #ddd;
}
.muted {
  font-size: 11px;
  color: #aaa;
}
.themes {
  height: 63px;
  padding: 10px 0 0 9px;
}
.select {
  display: flex;
  align-items: center;
  justify-content: space-between;
  height: 23px;
  background: #222;
  background-image: linear-gradient(#333, #181818);
  border: 1px solid #191919;
  border-radius: 3px;
  padding: 0 5px;
  font-size: 12.3px;
  color: #ccc;
  box-shadow: 0 1px 0 #555;
}
.select svg {
  color: #ddd;
}
.theme-select {
  width: 132px;
}
.theme-tag {
  width: 129px;
  height: 21px;
  margin: 3px 0 0 2px;
  background: #4f7fb5;
  border-radius: 2px;
  color: #eaf1f9;
  font-size: 12px;
  text-align: center;
  line-height: 21px;
  white-space: nowrap;
}
.styles {
  height: 42px;
  padding-top: 18px;
}
.tree-row.small {
  margin-left: 5px;
  height: 20px;
  gap: 5px;
  font-size: 12px;
}
.tri-right.sm {
  border-width: 4px;
  border-left-width: 5px;
  border-right: none;
}
.white-scroll {
  width: 15px;
  flex: none;
  background: #fff;
  margin-top: 4px;
  padding: 4px 4px 0;
}
.white-scroll span {
  display: block;
  width: 7px;
  height: 548px;
  background: #c4c4c4;
  border-radius: 4px;
}
.pages {
  flex: 1;
  position: relative;
  min-width: 0;
}
.traffic {
  width: 85px;
  height: 27px;
  margin: 15px 0 0 16px;
  background: #3d3d3d;
  border-radius: 4px 4px 0 0;
  color: #ccc;
  font-size: 12.5px;
  text-align: center;
  line-height: 26px;
  position: relative;
}
.traffic::after {
  content: "";
  position: absolute;
  left: 0;
  top: 27px;
  border-top: 4px solid #3d3d3d;
  border-left: 42px solid transparent;
  border-right: 43px solid transparent;
}
.thumb-area {
  display: flex;
  margin-top: 12px;
  padding-left: 9px;
}
.thumb-list {
  width: 81px;
  flex: none;
  display: flex;
  flex-direction: column;
  gap: 16px;
  padding-top: 3px;
}
.thumb {
  height: 55px;
  background: #e6e6e6;
  box-shadow: 0 0 0 2px #111;
  display: flex;
  flex-direction: column;
  overflow: hidden;
  font-size: 3px;
  color: #fff;
}
.thumb.selected {
  box-shadow: 0 0 0 2px #777;
}
.th-bar {
  display: block;
  height: 6px;
  flex: none;
  background: #e4e4e4;
}
.th-hero {
  height: 14px;
  flex: none;
  background: #bcbcbc;
  text-align: center;
  line-height: 14px;
}
.th-hero b {
  font-weight: 400;
}
.th-hero.tall {
  height: 36px;
  background: #b4b4b4;
  padding-top: 8px;
  line-height: 6px;
}
.th-hero .th-btn {
  display: block;
  margin: 3px auto 0;
}
.th-btn {
  width: 15px;
  height: 4px;
  background: #5f6f8a;
  display: block;
}
.th-foot {
  flex: 1;
  background: #c5cedc;
  padding: 5px 3px 0 60px;
}
.th-split {
  flex: 1;
  display: flex;
  gap: 5px;
  padding: 7px 4px 0;
}
.th-img {
  width: 26px;
  height: 25px;
  background: #c2c2c2;
  display: block;
}
.th-lines {
  flex: 1;
  display: block;
  height: 24px;
  background: repeating-linear-gradient(#999 0 1px, #e0e0e0 1px 3px);
}
.thumb.form {
  color: #333;
  padding: 2px 5px;
  text-align: center;
  align-items: center;
}
.thumb.form b {
  font-weight: 700;
  white-space: nowrap;
  margin-bottom: 7px;
}
.th-field {
  display: block;
  width: 100%;
  height: 3px;
  background: #d2d2d2;
  margin-bottom: 4px;
}
.thumb.form .th-btn {
  margin-top: 3px;
  width: 11px;
}
.thumbs-scroll {
  margin: -3px 0 0 5px;
  width: 13px;
  height: 560px;
  padding: 4px 3px 0;
}
.thumbs-scroll span {
  height: 552px;
}
.add-page {
  width: 80px;
  height: 25px;
  margin: 12px 0 0 18px;
  background: #444;
  border-radius: 3px;
  text-align: center;
  font-size: 20px;
  line-height: 25px;
  color: #ccc;
}
.help-bubble {
  position: absolute;
  right: 0;
  top: 687px;
  width: 37px;
  height: 39px;
  background: #2f72e4;
  border-radius: 20px 0 0 20px;
  color: #fff;
  font-size: 26px;
  font-weight: 700;
  text-align: center;
  line-height: 39px;
}
.dock-foot {
  height: 26px;
  flex: none;
  background: #3a3a3a;
  display: flex;
  align-items: center;
  gap: 15px;
  padding-left: 65px;
  color: #777;
  font-size: 12px;
}
.dock-foot span {
  display: flex;
  align-items: center;
  gap: 4px;
}

/* edit actions dialog */
.modal {
  position: absolute;
  left: 604px;
  top: 338px;
  width: 632px;
  height: 347px;
  background: #474747;
  border: 1px solid #1e1e1e;
  border-radius: 3px;
  color: #ccc;
  font-size: 12px;
  box-shadow: 0 1px 3px rgba(0, 0, 0, .4);
}
.modal::after {
  content: "";
  position: absolute;
  right: -6px;
  top: 46px;
  border-left: 6px solid #474747;
  border-top: 6px solid transparent;
  border-bottom: 6px solid transparent;
}
.modal-title {
  height: 30px;
  padding-left: 10px;
  line-height: 27px;
  font-size: 11.5px;
  letter-spacing: 1px;
  color: #ccc;
}
.modal-inner {
  margin: 0 7px;
  height: 268px;
  background: #3c3c3c;
  border-radius: 3px;
  padding: 6px;
}
.modal-tabs {
  height: 26px;
  background: #111;
  display: flex;
  align-items: flex-end;
  padding-left: 4px;
  border-radius: 3px 3px 0 0;
}
.modal-tab {
  height: 22px;
  padding: 0 13.5px;
  line-height: 22px;
  color: #b5b5b5;
  white-space: nowrap;
}
.modal-tab.active {
  width: 86px;
  padding: 0 14px;
  background: #333;
  color: #ddd;
  border-radius: 3px 3px 0 0;
  margin-right: 1px;
}
.modal-sec {
  background: #333;
  padding-left: 18px;
  border-radius: 0 0 3px 3px;
}
.goto {
  height: 93px;
  padding-top: 18px;
}
.tag {
  height: 94px;
  margin-top: 5px;
  padding-top: 19px;
  border-radius: 3px;
}
.attrs {
  height: 32px;
  margin-top: 6px;
  line-height: 32px;
  font-size: 11.5px;
  border-radius: 3px;
  color: #bbb;
}
.m-row {
  display: flex;
  align-items: flex-start;
  gap: 6px;
  line-height: 23px;
  color: #ccc;
}
.m-btn {
  height: 21px;
  padding: 0 5px;
  background: #4c4c4c;
  border-radius: 3px;
  line-height: 20px;
  font-size: 11px;
  color: #ccc;
  white-space: nowrap;
  text-align: center;
}
.hash {
  width: 77px;
}
.window {
  width: 89px;
  height: 22px;
  line-height: 21px;
}
.newtag {
  width: 70px;
}
.page-select {
  width: 187px;
  margin-top: 1px;
}
.tag-select {
  width: 145px;
  margin-left: -1px;
}
.open-row {
  margin-top: 13px;
}
.convert {
  margin-top: 16px;
  gap: 6px;
  align-items: center;
  line-height: 18px;
}
.checkbox.small {
  margin-top: -3px;
}
.modal-foot {
  display: flex;
  align-items: center;
  height: 24px;
  margin-top: 11px;
  padding: 0 11px;
}
.m-remove {
  height: 23px;
  width: 70px;
  gap: 4px;
  background: #505050;
}
.cancel {
  margin-left: auto;
  color: #aaa;
  margin-right: 12px;
}
.ok {
  width: 27px;
  height: 24px;
  margin-top: 2px;
  background: #0a66d6;
  color: #eef;
  border-radius: 3px;
  text-align: center;
  line-height: 23px;
}
```
